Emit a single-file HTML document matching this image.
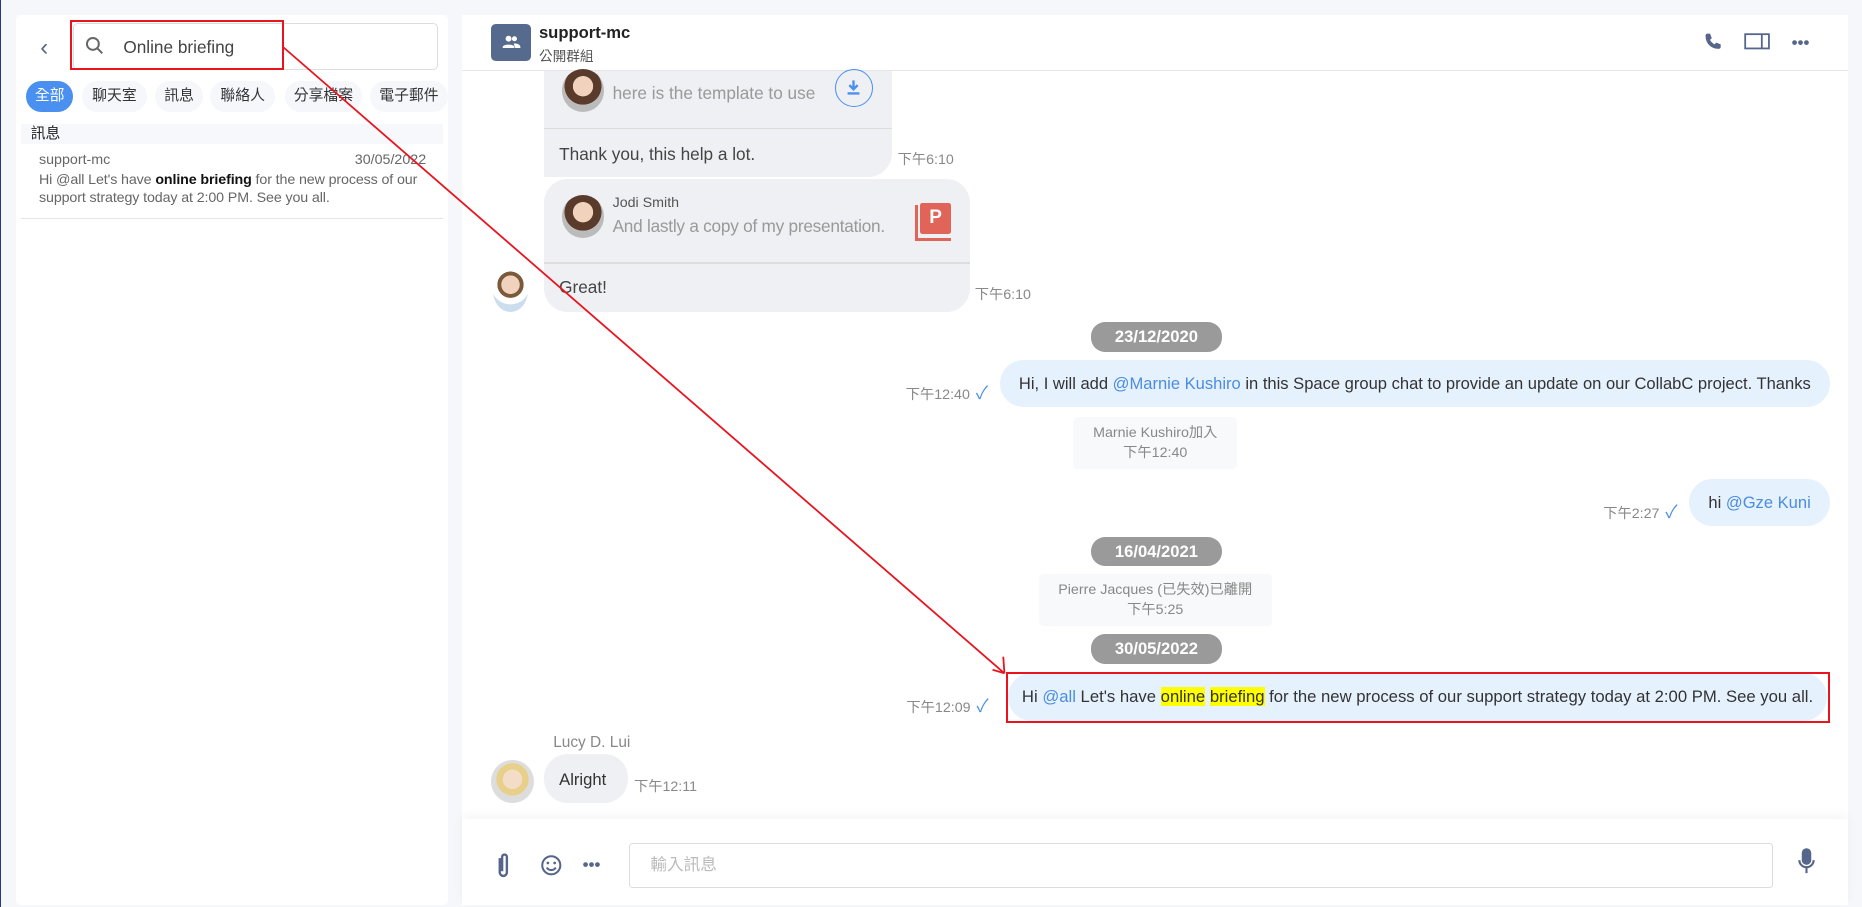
<!DOCTYPE html>
<html><head><meta charset="utf-8"><style>
*{box-sizing:border-box;margin:0;padding:0}
html,body{width:1862px;height:907px;overflow:hidden;background:#f5f7fb}
body{font-family:"Liberation Sans","Noto Sans CJK TC",sans-serif;color:#333}
#w{zoom:1.1875;position:relative;width:1568px;height:764px;border-left:1px solid #2a3a8a}
.abs{position:absolute}
.lp{left:13px;top:13px;width:363px;height:749px;background:#fff;border-radius:4px}
.cp{left:388px;top:13px;width:1167px;height:749px;background:#fff}
.pill{position:absolute;top:68px;height:26px;border-radius:13px;background:#f5f7fb;font-size:12.5px;line-height:26px;text-align:center;color:#333}
.date{position:absolute;background:#9a9a9a;color:#fff;font-size:14px;font-weight:bold;border-radius:12px;height:25px;line-height:25px;text-align:center;width:110px}
.sys{position:absolute;background:#f8f9fa;color:#888;font-size:12px;text-align:center;line-height:17px;padding:5px 0;border-radius:4px;white-space:nowrap}
.t{position:absolute;font-size:12px;color:#888;white-space:nowrap}
.chk{color:#4a90e2;font-size:15px;margin-left:5px}
.row{position:absolute;right:15px;display:flex;align-items:center;white-space:nowrap}
.row .ts{font-size:12px;color:#888;margin-right:10px;margin-top:14px}
.me{background:#e6f1fe;border-radius:20px;font-size:13.95px;color:#333;height:40px;line-height:40px;padding:0 16px}
.at{color:#4a8de0}
.hl{background:#ffff00}
.bub{position:absolute;background:#eff0f4}
.av{position:absolute;width:36px;height:36px;border-radius:50%;background:radial-gradient(circle at 50% 40%,#f0d2bd 0 30%,#5a3a2a 31% 55%,#bbb 56%)}
</style></head><body><div id="w">
<div class="abs lp">
 <div class="abs" style="left:20px;top:16px;font-size:20px;color:#56658a">&#8249;</div>
 <div class="abs" style="left:48px;top:6px;width:307px;height:40px;border:1px solid #ddd;border-radius:4px"></div>
 <svg class="abs" style="left:56px;top:16px" width="20" height="20" viewBox="0 0 24 24"><circle cx="10" cy="10" r="6" fill="none" stroke="#666" stroke-width="2"/><path d="M14.5 14.5l5 5" stroke="#666" stroke-width="2"/></svg>
 <div class="abs" style="left:90px;top:18px;font-size:14.5px;color:#444">Online briefing</div>
 <div class="pill" style="left:8px;top:55px;width:40px;background:#4a90f0;color:#fff">全部</div>
 <div class="pill" style="left:55px;top:55px;width:55px">聊天室</div>
 <div class="pill" style="left:117px;top:55px;width:40px">訊息</div>
 <div class="pill" style="left:163px;top:55px;width:55px">聯絡人</div>
 <div class="pill" style="left:226px;top:55px;width:65px">分享檔案</div>
 <div class="pill" style="left:298px;top:55px;width:65px">電子郵件</div>
 <div class="abs" style="left:4px;top:91px;width:355px;height:17px;background:#f7f8fc;font-size:12.5px;line-height:17px;padding-left:8px;color:#222">訊息</div>
 <div class="abs" style="left:4px;top:110px;width:355px;height:61px;border-bottom:1px solid #e4e4e4">
  <div class="abs" style="left:15px;top:5px;font-size:12px;color:#666">support-mc</div>
  <div class="abs" style="right:14px;top:5px;font-size:12px;color:#666">30/05/2022</div>
  <div class="abs" style="left:15px;top:22px;width:335px;font-size:12px;line-height:15px;color:#666;letter-spacing:-0.1px">Hi @all Let's have <b style="color:#111">online briefing</b> for the new process of our support strategy today at 2:00 PM. See you all.</div>
 </div>
</div>
<div class="abs cp">
 <div class="abs" style="left:0;top:0;width:1167px;height:47px;border-bottom:1px solid #e6e6e6"></div>
 <div class="abs" style="left:25px;top:7px;width:33px;height:31px;background:#566a8e;border-radius:4px"></div>
 <svg class="abs" style="left:33px;top:14px" width="17" height="17" viewBox="0 0 24 24"><circle cx="9" cy="8" r="3.5" fill="#fff"/><circle cx="16" cy="8" r="3" fill="#fff"/><path d="M2 18c0-4 14-4 14 0v1H2zM15 14c4-1 8 1 8 4v1h-6" fill="#fff"/></svg>
 <div class="abs" style="left:65px;top:6px;font-size:14px;font-weight:bold;color:#222">support-mc</div>
 <div class="abs" style="left:65px;top:25px;font-size:11.5px;color:#555">公開群組</div>
 <svg class="abs" style="left:1044px;top:13px" width="18" height="18" viewBox="0 0 24 24"><path d="M6 3l3 0 2 5-2 2c1 2 3 4 5 5l2-2 5 2v3c0 1-1 2-2 2C10 20 4 14 4 5c0-1 1-2 2-2z" fill="#56658a"/></svg>
 <svg class="abs" style="left:1080px;top:15px" width="22" height="15"><rect x="1" y="1" width="20" height="12" fill="none" stroke="#56658a" stroke-width="1.5"/><path d="M15 1v12" stroke="#56658a" stroke-width="1.5"/></svg>
 <svg class="abs" style="left:1119px;top:20px" width="16" height="6"><circle cx="3" cy="3" r="2" fill="#56658a"/><circle cx="8" cy="3" r="2" fill="#56658a"/><circle cx="13" cy="3" r="2" fill="#56658a"/></svg>

 <div class="bub" style="left:69px;top:47px;width:293px;height:89px;border-radius:0 0 20px 0"></div>
 <div class="abs" style="left:69px;top:95px;width:293px;height:1px;background:#ddd"></div>
 <div class="av" style="left:84px;top:45px"></div>
 <div class="abs" style="left:127px;top:57px;font-size:14.5px;color:#999;white-space:nowrap">here is the template to use</div>
 <div class="abs" style="left:314px;top:45px;width:32px;height:32px;border:1.5px solid #4a90f0;border-radius:50%"></div>
 <svg class="abs" style="left:322px;top:53px" width="16" height="16" viewBox="0 0 16 16"><path d="M8 2v7M4.5 6L8 9.5 11.5 6" fill="none" stroke="#4a90f0" stroke-width="2"/><path d="M3 13h10" stroke="#4a90f0" stroke-width="2"/></svg>
 <div class="abs" style="left:82px;top:108px;font-size:14.5px;color:#444">Thank you, this help a lot.</div>
 <div class="t" style="left:367px;top:112px">下午6:10</div>

 <div class="bub" style="left:69px;top:138px;width:359px;height:112px;border-radius:20px 20px 20px 20px"></div>
 <div class="abs" style="left:69px;top:208px;width:359px;height:1px;background:#ddd"></div>
 <div class="av" style="left:84px;top:151px"></div>
 <div class="abs" style="left:127px;top:151px;font-size:12px;color:#555">Jodi Smith</div>
 <div class="abs" style="left:127px;top:169px;font-size:14.5px;color:#999;white-space:nowrap;letter-spacing:-0.2px">And lastly a copy of my presentation.</div>
 <div class="abs" style="left:382px;top:160px;width:30px;height:30px;border-left:3px solid #e06458;border-bottom:3px solid #e06458"></div>
 <div class="abs" style="left:386px;top:158px;width:26px;height:26px;background:#e06458;border-radius:2px;color:#fff;font-weight:bold;font-size:16px;text-align:center;line-height:26px">P</div>
 <div class="abs" style="left:82px;top:220px;font-size:14.5px;color:#444">Great!</div>
 <div class="t" style="left:432px;top:225px">下午6:10</div>
 <div class="av" style="left:26px;top:214px;width:30px;height:36px;background:radial-gradient(circle at 50% 35%,#f0d2bd 0 28%,#7a5a3a 29% 40%,#fff 41% 60%,#cde 61%)"></div>

 <div class="date" style="left:530px;top:258px">23/12/2020</div>
 <div class="row" style="top:290px"><span class="ts">下午12:40<span class="chk">✓</span></span><div class="me">Hi, I will add <span class="at">@Marnie Kushiro</span> in this Space group chat to provide an update on our CollabC project. Thanks</div></div>
 <div class="sys" style="left:515px;top:338px;width:138px">Marnie Kushiro加入<br>下午12:40</div>
 <div class="row" style="top:390px"><span class="ts">下午2:27<span class="chk">✓</span></span><div class="me">hi <span class="at">@Gze Kuni</span></div></div>
 <div class="date" style="left:530px;top:439px">16/04/2021</div>
 <div class="sys" style="left:486px;top:470px;width:196px">Pierre Jacques (已失效)已離開<br>下午5:25</div>
 <div class="date" style="left:530px;top:521px">30/05/2022</div>
 <div class="row" style="top:554px;right:17px"><span class="ts" style="margin-right:16px">下午12:09<span class="chk">✓</span></span><div class="me" style="padding:0 12px;font-size:14.05px">Hi <span class="at">@all</span> Let's have <span class="hl">online</span> <span class="hl">briefing</span> for the new process of our support strategy today at 2:00 PM. See you all.</div></div>
 <div class="abs" style="left:458px;top:553px;width:694px;height:43px;border:2px solid #e8141e"></div>
 <div class="abs" style="left:77px;top:605px;font-size:13px;color:#888">Lucy D. Lui</div>
 <div class="av" style="left:25px;top:627px;background:radial-gradient(circle at 50% 45%,#f3dcc8 0 30%,#e8cf8a 31% 50%,#ddd 51%)"></div>
 <div class="bub" style="left:69px;top:622px;width:71px;height:41px;border-radius:20px"></div>
 <div class="abs" style="left:82px;top:635px;font-size:14px;color:#333">Alright</div>
 <div class="t" style="left:145px;top:640px">下午12:11</div>

 <div class="abs" style="left:0;top:677px;width:1167px;height:72px;background:#fff;box-shadow:0 -4px 8px rgba(0,0,0,.04)"></div>
 <svg class="abs" style="left:28px;top:704px" width="14" height="24" viewBox="0 0 14 24"><path d="M4 6v12a3 3 0 0 0 6 0V5a2 2 0 0 0-4 0v12" fill="none" stroke="#56658a" stroke-width="2"/></svg>
 <svg class="abs" style="left:66px;top:706px" width="19" height="19" viewBox="0 0 20 20"><circle cx="10" cy="10" r="8" fill="none" stroke="#56658a" stroke-width="1.8"/><circle cx="7" cy="8" r="1.2" fill="#56658a"/><circle cx="13" cy="8" r="1.2" fill="#56658a"/><path d="M6 12c2 3 6 3 8 0" fill="none" stroke="#56658a" stroke-width="1.8"/></svg>
 <svg class="abs" style="left:101px;top:712px" width="16" height="6"><circle cx="3" cy="3" r="2" fill="#56658a"/><circle cx="8" cy="3" r="2" fill="#56658a"/><circle cx="13" cy="3" r="2" fill="#56658a"/></svg>
 <div class="abs" style="left:141px;top:697px;width:963px;height:38px;border:1px solid #ddd;border-radius:3px;font-size:14px;color:#bbb;line-height:36px;padding-left:17px">輸入訊息</div>
 <svg class="abs" style="left:1124px;top:700px" width="16" height="24" viewBox="0 0 16 24"><rect x="4" y="1" width="8" height="14" rx="4" fill="#56658a"/><path d="M2 11a6 6 0 0 0 12 0M8 17v5" fill="none" stroke="#56658a" stroke-width="1.8"/></svg>
</div>
<div class="abs" style="left:58px;top:17px;width:180px;height:42px;border:2px solid #e8141e"></div>
<svg class="abs" style="left:0;top:0" width="1568" height="764"><path d="M238 40L845 567" stroke="#e8141e" stroke-width="1.5"/><path d="M845 567l-10-3M845 567l-1-14" stroke="#e8141e" stroke-width="1.5"/></svg>
</div></body></html>
